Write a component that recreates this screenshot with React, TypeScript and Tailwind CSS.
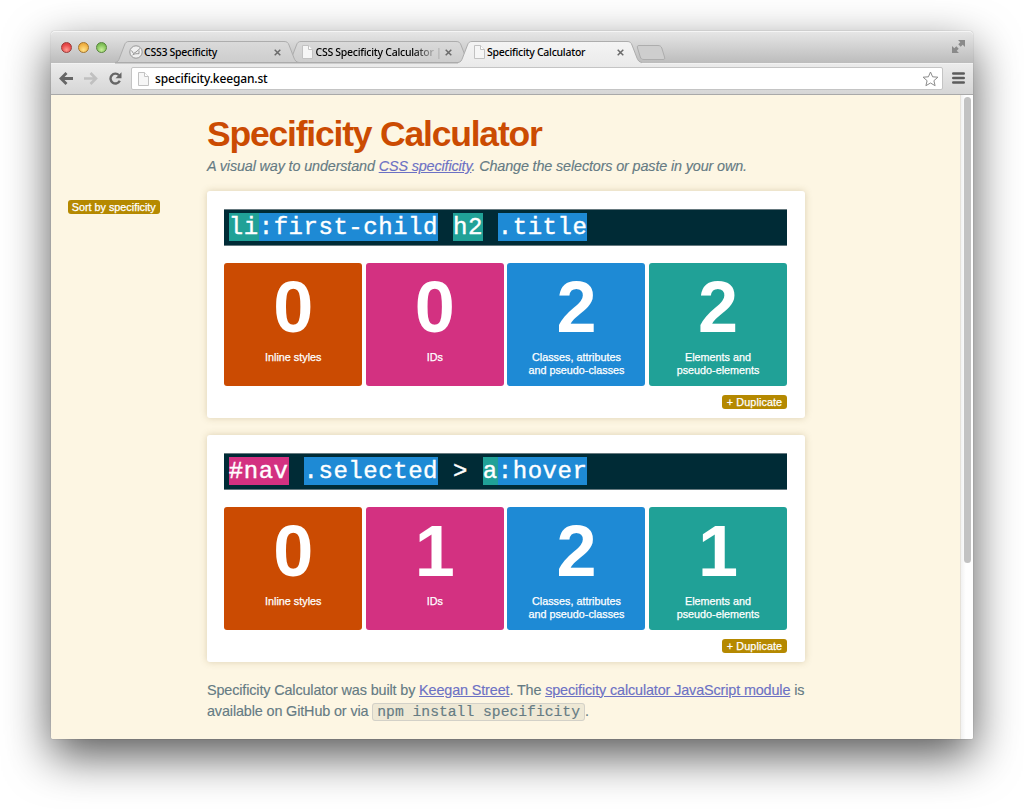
import React from "react";

type Kind = "inline" | "id" | "cls" | "el" | "none";

const fills: Record<Kind, string> = {
  inline: "bg-[#cb4b02]",
  id: "bg-[#d33181]",
  cls: "bg-[#1e8ad5]",
  el: "bg-[#20a197]",
  none: "",
};

function PageIcon({ className = "" }: { className?: string }) {
  return (
    <svg className={className} width="11" height="14" viewBox="0 0 11 14">
      <path d="M.5.5h6l4 4v9H.5z" fill="#f6f6f6" stroke="#c2c2c2" />
      <path d="M6.5.5v4h4" fill="#fff" stroke="#c2c2c2" />
    </svg>
  );
}

function GaugeIcon() {
  return (
    <svg width="14" height="14" viewBox="0 0 14 14">
      <circle cx="7" cy="7" r="6.2" fill="#f0f0f0" stroke="#8d8d8d" strokeWidth=".9" />
      <path d="M2.5 5.500l2 3 2.500-1.500 4-3.500M3.500 10c2-1.500 4-1.300 6.500-1.300V5.500" fill="none" stroke="#8a8a8a" strokeWidth=".9" />
    </svg>
  );
}

function CloseIcon() {
  return (
    <svg width="7" height="7" viewBox="0 0 7 7">
      <path d="M.7.7l5.6 5.6M6.3.7L.7 6.3" stroke="#6a6a6a" strokeWidth="1.5" />
    </svg>
  );
}

function Tab({ title, icon, active = false, faded = false, layer }: {
  title: string; icon: React.ReactNode; active?: boolean; faded?: boolean; layer: string;
}) {
  return (
    <div className={`relative -mr-[14.5px] h-[22px] w-[186px] shrink-0 ${layer}`}>
      <svg className="absolute inset-0" width="186" height="23" viewBox="0 0 186 23">
        <defs>
          <linearGradient id={active ? "tabOn" : "tabOff"} x1="0" y1="0" x2="0" y2="1">
            <stop offset="0" stopColor={active ? "#f4f4f4" : "#dadada"} />
            <stop offset="1" stopColor={active ? "#ebebeb" : "#cccccc"} />
          </linearGradient>
        </defs>
        <path
          d="M0 21.5C3 21 3.500 19.500 4.500 17L9.500 4C10.500 1.500 11.500.5 14 .5H169C172 .5 173 1.500 174 4L179 17C180 19.500 181 21 184 21.500V23H0Z"
          fill={active ? "url(#tabOn)" : "url(#tabOff)"}
        />
        <path
          d="M0 21.500C3 21 3.500 19.500 4.500 17L9.500 4C10.500 1.500 11.500.5 14 .5H169C172 .5 173 1.500 174 4L179 17C180 19.500 181 21 184 21.500"
          fill="none"
          stroke="#adadad"
        />
        {!active && <path d="M0 21.500H186" stroke="#ababab" />}
      </svg>
      <div className="relative flex h-full items-center pl-[13px]">
        <span className="flex w-[16px] shrink-0 justify-center">{icon}</span>
        <span className={`w-[125px] shrink-0 whitespace-nowrap text-[10.5px] leading-[16px] font-medium tracking-[-0.27px] text-black ${faded ? "bg-[linear-gradient(90deg,#000_78%,#aaa_94%)] bg-clip-text text-transparent" : ""}`}>
          {title}
        </span>
        <span className="ml-[4.5px]"><CloseIcon /></span>
      </div>
    </div>
  );
}

function Light({ className }: { className: string }) {
  return <span className={`size-[11px] rounded-full border ${className}`} />;
}

function Duplicate() {
  return (
    <button className="h-[14px] w-[65px] rounded-[3px] bg-[#b58900] text-center text-[10.8px] leading-[14px] tracking-[0.1px] whitespace-nowrap text-white [-webkit-text-stroke:0.25px_white]">
      +&nbsp;Duplicate
    </button>
  );
}

function Card({ parts, scores }: { parts: [string, Kind][]; scores: number[] }) {
  const cells: [Kind, React.ReactNode][] = [
    ["inline", "Inline styles"],
    ["id", "IDs"],
    ["cls", <>Classes, attributes<br />and pseudo-classes</>],
    ["el", <>Elements and<br />pseudo-elements</>],
  ];
  return (
    <section className="flex h-[227px] w-[598px] flex-col rounded-[3px] bg-white pt-[17.5px] pr-[18px] pl-[17.3px] shadow-[0_0_7px_rgba(120,95,30,0.25)]">
      <div className="flex h-[37px] shrink-0 items-center border-y border-[#66797f] bg-[#002b36] pl-[4.5px] font-['Liberation_Mono',monospace] text-[24px] leading-[29px] tracking-[0.54px] whitespace-pre text-white [-webkit-text-stroke:0.4px_white]">
        {parts.map(([t, k], i) => (
          <span key={i} className={`h-[28px] ${fills[k]}`}>{t}</span>
        ))}
      </div>
      <div className="mt-[17.500px] grid grid-cols-4 gap-[3.700px]">
        {cells.map(([k, label], i) => (
          <div key={k} className={`flex h-[122.500px] flex-col items-center rounded-[3px] text-white ${fills[k]}`}>
            <div className="mt-[7px] h-[74px] text-[72px] leading-[74px] font-bold">{scores[i]}</div>
            <div className="mt-[7px] text-center text-[10.8px] leading-[12.5px] [-webkit-text-stroke:0.25px_white]">{label}</div>
          </div>
        ))}
      </div>
      <div className="mt-[9px] flex justify-end"><Duplicate /></div>
    </section>
  );
}

export default function App() {
  return (
    <div className="h-[809px] w-[1024px] overflow-hidden bg-white pt-[31px] pl-[51px] font-['Liberation_Sans',Arial,sans-serif]">
      <div className="flex h-[708px] w-[922px] flex-col rounded-t-[4px] rounded-b-[2px] shadow-[0_17px_46px_rgba(0,0,0,0.66),0_0_1px_rgba(0,0,0,0.5)]">
        <header className="flex h-[32px] shrink-0 rounded-t-[4px] border-t border-[#f5f5f5] bg-linear-to-b from-[#e6e6e6] to-[#bcbcbc] font-['Noto_Sans',sans-serif]">
          <div className="flex w-[64px] shrink-0 gap-[6.500px] pt-[10px] pl-[9.500px]">
            <Light className="border-[#9c3a38] bg-[radial-gradient(circle_at_50%_75%,#ff9a91,#e84a4a_60%,#d43a3c)]" />
            <Light className="border-[#a5752b] bg-[radial-gradient(circle_at_50%_75%,#ffe28a,#f2b548_60%,#e29c35)]" />
            <Light className="border-[#57853b] bg-[radial-gradient(circle_at_50%_75%,#c8f09a,#86c45c_60%,#66a848)]" />
          </div>
          <div className="flex items-end">
            <Tab title="CSS3 Specificity" icon={<GaugeIcon />} layer="z-20" />
            <Tab title="CSS Specificity Calculator |" icon={<PageIcon />} faded layer="z-10" />
            <Tab title="Specificity Calculator" icon={<PageIcon />} active layer="z-30" />
            <svg className="mb-[2.500px] ml-[6px]" width="30" height="16" viewBox="0 0 30 16">
              <path d="M3 .5H22C24 .5 25 1.300 25.800 3L28.500 12C29 14 28.500 14.500 27 14.500H8C6 14.500 5 14 4.300 12L1.500 3C1 1.200 1.500.5 3 .5Z" fill="#cecece" stroke="#adadad" />
            </svg>
          </div>
          <svg className="mt-[8px] mr-[8px] ml-auto" width="13" height="13" viewBox="0 0 13 13" fill="#8a8a8a">
            <path d="M6 0h7v7l-2.300-2.300-2 2-2.400-2.400 2-2zM7 13H0V6l2.300 2.300 2-2 2.400 2.400-2 2z" />
          </svg>
        </header>
        <div className="flex h-[32px] shrink-0 items-start border-t border-b border-t-[#f2f2f2] border-b-[#a9a9a9] bg-linear-to-b from-[#ebebeb] to-[#d6d6d6] pt-[3px] font-['Noto_Sans',sans-serif]">
          <svg className="mt-[5px] ml-[8px]" width="15" height="13" viewBox="0 0 15 13" fill="none" stroke="#666" strokeWidth="2.800">
            <path d="M14 6.500H2.500M7.500 1L2 6.500l5.500 5.500" />
          </svg>
          <svg className="mt-[5px] ml-[9px]" width="15" height="13" viewBox="0 0 15 13" fill="none" stroke="#c0c0c0" strokeWidth="2.600">
            <path d="M1 6.500H12.500M7.500 1L13 6.500 7.500 12" />
          </svg>
          <svg className="mt-[5px] ml-[11px]" width="13" height="13" viewBox="0 0 13 13">
            <path d="M10.800 8.800A4.900 4.900 0 1 1 10 3.200" fill="none" stroke="#666" strokeWidth="2.400" />
            <path d="M12.500.3V6.300H6.500z" fill="#666" />
          </svg>
          <div className="ml-[8.500px] flex h-[23px] w-[812px] items-center rounded-[2px] border border-[#c4c4c4] bg-white pl-[6px]">
            <PageIcon />
            <span className="ml-[6.500px] text-[12px] leading-[20px] font-medium tracking-[-0.15px] text-black">specificity.keegan.st</span>
            <svg className="mr-[3px] ml-auto" width="17" height="16" viewBox="0 0 17 16">
              <path d="M8.500 1L10.600 5.800 15.900 6.200 11.900 9.700 13.100 14.700 8.500 12 3.900 14.700 5.100 9.700 1.100 6.200 6.400 5.800Z" fill="#fff" stroke="#8b8b8b" strokeLinejoin="round" />
            </svg>
          </div>
          <svg className="mt-[5px] ml-[9px]" width="13" height="12" viewBox="0 0 13 12" stroke="#5c5c5c" strokeWidth="2.400" strokeLinecap="round">
            <path d="M1.200 1.500H11.800M1.200 6H11.800M1.200 10.500H11.800" />
          </svg>
        </div>
        <div className="flex h-[644px] overflow-hidden rounded-b-[2px] bg-[#fdf6e3]">
          <aside className="w-[156px] shrink-0 pt-[105px] pl-[17px]">
            <button className="block h-[14px] w-[91.500px] rounded-[3px] bg-[#b58900] text-center text-[10.8px] leading-[14px] whitespace-nowrap text-white [-webkit-text-stroke:0.25px_white]">
              Sort by specificity
            </button>
          </aside>
          <main className="w-[599px] shrink-0 text-[14.4px] text-[#657b83]">
            <h1 className="mt-[19px] h-[41px] text-[35.5px] leading-[41px] font-bold tracking-[-1.2px] whitespace-nowrap text-[#cb4b02]">Specificity Calculator</h1>
            <p className="h-[36px] leading-[22px] tracking-[-0.14px] whitespace-nowrap italic [-webkit-text-stroke:0.15px_currentColor]">
              A visual way to understand <a className="text-[#6c71c4] underline">CSS specificity</a>. Change the selectors or paste in your own.
            </p>
            <div className="flex flex-col gap-[17px]">
              <Card parts={[["li", "el"], [":first-child", "cls"], [" ", "none"], ["h2", "el"], [" ", "none"], [".title", "cls"]]} scores={[0, 0, 2, 2]} />
              <Card parts={[["#nav", "id"], [" ", "none"], [".selected", "cls"], [" > ", "none"], ["a", "el"], [":hover", "cls"]]} scores={[0, 1, 2, 1]} />
            </div>
            <p className="mt-[17.500px] leading-[21.500px] tracking-[-0.13px] whitespace-nowrap [-webkit-text-stroke:0.15px_currentColor]">
              Specificity Calculator was built by <a className="text-[#6c71c4] underline">Keegan Street</a>. The <a className="text-[#6c71c4] underline">specificity calculator JavaScript module</a> is<br />
              available on GitHub or via <code className="rounded-[3px] border border-[#d3d1c8] bg-[#eee8d5] px-[4px] font-['Liberation_Mono',monospace] text-[14.700px] tracking-normal">npm install specificity</code>.
            </p>
          </main>
          <div className="ml-auto flex w-[13px] justify-center border-l border-[#e6e2da] bg-linear-to-r from-[#f1f1f1] to-[#fefefe] to-40% pt-[2px]">
            <div className="h-[466px] w-[7px] rounded-full bg-[#c2c2c2]" />
          </div>
        </div>
      </div>
    </div>
  );
}
